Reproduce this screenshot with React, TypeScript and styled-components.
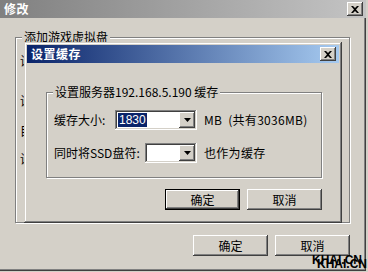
import React from "react";
import styled, { createGlobalStyle, css } from "styled-components";

const GlobalStyle = createGlobalStyle`
  html, body {
    margin: 0;
    padding: 0;
    background: #d4d0c8;
  }
  body {
    font-family: "Noto Sans CJK SC", "Liberation Sans", sans-serif;
    font-size: 12px;
    line-height: 14px;
    color: #000;
  }
`;

const raised = css`
  background: #d4d0c8;
  box-shadow: inset -1px -1px #404040, inset 1px 1px #fff, inset -2px -2px #808080, inset 2px 2px #d4d0c8;
`;

const Window = styled.div`
  position: relative;
  width: 366px;
  height: 271px;
  background: #d4d0c8;
  box-shadow: inset -1px -1px #404040, inset -2px -2px #808080;
`;

const TitleBar = styled.div<{ $active?: boolean }>`
  display: flex;
  align-items: center;
  justify-content: space-between;
  height: 18px;
  padding: 0 3px 0 4px;
  background: ${(p) =>
    p.$active ? "linear-gradient(90deg, #0a246a, #a6caf0)" : "linear-gradient(90deg, #808080, #c4c4c4)"};
  color: #fff;
  font-weight: bold;
  font-size: 12px;
  letter-spacing: 0.5px;
`;

const CloseBtn = styled.div`
  ${raised};
  width: 16px;
  height: 14px;
  display: flex;
  align-items: center;
  justify-content: center;
`;

const Body = styled.div<{ $pad: string }>`
  display: flex;
  flex-direction: column;
  padding: ${(p) => p.$pad};
`;

const Group = styled.div<{ $h: number }>`
  position: relative;
  height: ${(p) => p.$h}px;
  border: 1px solid #808080;
  box-shadow: inset 1px 1px #fff, 1px 1px #fff;
  box-sizing: border-box;
`;

const Legend = styled.span`
  position: absolute;
  top: -8px;
  left: 6px;
  padding: 0 2px;
  background: #d4d0c8;
  white-space: nowrap;
`;

// labels of the outer form, mostly hidden behind the dialog
const HiddenLabels = styled.div`
  display: flex;
  flex-direction: column;
  padding: 16px 0 0 4px;
`;

const HiddenLabel = styled.div<{ $top: number }>`
  margin-top: ${(p) => p.$top}px;
  width: 5px;
  overflow: hidden;
  white-space: nowrap;
`;

const ButtonRow = styled.div<{ $top: number }>`
  display: flex;
  justify-content: flex-end;
  gap: 7px;
  margin-top: ${(p) => p.$top}px;
`;

const Button = styled.div<{ $default?: boolean }>`
  ${raised};
  width: 75px;
  height: 21px;
  box-sizing: border-box;
  display: flex;
  align-items: center;
  justify-content: center;
  font-size: 12px;
  ${(p) =>
    p.$default &&
    css`
      border: 1px solid #000;
    `}
`;

const Dialog = styled.div`
  position: absolute;
  left: 24px;
  top: 42px;
  width: 318px;
  height: 181px;
  box-sizing: border-box;
  padding: 3px;
  background: #d4d0c8;
  box-shadow: inset -1px -1px #404040, inset 1px 1px #d4d0c8, inset -2px -2px #808080, inset 2px 2px #fff;
  display: flex;
  flex-direction: column;
`;

const FormRows = styled.div`
  display: flex;
  flex-direction: column;
  gap: 13px;
  padding: 17px 0 0 7px;
`;

const Row = styled.div`
  display: flex;
  align-items: center;
`;

const Label = styled.span<{ $w: number }>`
  width: ${(p) => p.$w}px;
  white-space: nowrap;
`;

const Combo = styled.div<{ $w: number }>`
  width: ${(p) => p.$w}px;
  height: 20px;
  box-sizing: border-box;
  padding: 2px;
  background: #fff;
  box-shadow: inset -1px -1px #fff, inset 1px 1px #808080, inset -2px -2px #d4d0c8, inset 2px 2px #404040;
  display: flex;
  align-items: stretch;
`;

const ComboText = styled.div`
  flex: 1;
  display: flex;
  align-items: center;
  padding-left: 1px;
`;

const Selected = styled.span`
  background: #0a246a;
  color: #fff;
  font-family: "Liberation Sans", sans-serif;
  font-size: 12px;
  line-height: 14px;
  padding: 0 1px;
`;

const DropBtn = styled.div`
  ${raised};
  width: 16px;
  display: flex;
  align-items: center;
  justify-content: center;
`;

const After = styled.span`
  margin-left: 7px;
  white-space: nowrap;
  letter-spacing: 0.3px;
`;

const Watermark = styled.div`
  position: absolute;
  right: 4px;
  bottom: 6px;
  font-family: "Liberation Sans", sans-serif;
  font-weight: bold;
  font-size: 12px;
  line-height: 10px;
  color: #000;
  text-shadow: 5px 4px 0 #000;
`;

const CloseIcon = () => (
  <svg width="8" height="7" viewBox="0 0 8 7">
    <path d="M0 0h2l2 2 2-2h2L5 3.5 8 7H6L4 5 2 7H0l3-3.5z" fill="#000" />
  </svg>
);

const Arrow = () => (
  <svg width="7" height="4" viewBox="0 0 7 4">
    <path d="M0 0h7L3.5 4z" fill="#000" />
  </svg>
);

export default function App() {
  return (
    <>
      <GlobalStyle />
      <Window>
        <TitleBar>
          <span>修改</span>
          <CloseBtn>
            <CloseIcon />
          </CloseBtn>
        </TitleBar>
        <Body $pad="19px 16px 0 15px">
          <Group $h={186}>
            <Legend>添加游戏虚拟盘</Legend>
            <HiddenLabels>
              <HiddenLabel $top={0}>设置</HiddenLabel>
              <HiddenLabel $top={26}>设置</HiddenLabel>
              <HiddenLabel $top={16}>目录</HiddenLabel>
              <HiddenLabel $top={14}>设置</HiddenLabel>
            </HiddenLabels>
          </Group>
          <ButtonRow $top={12}>
            <Button>确定</Button>
            <Button>取消</Button>
          </ButtonRow>
        </Body>

        <Dialog>
          <TitleBar $active>
            <span>设置缓存</span>
            <CloseBtn>
              <CloseIcon />
            </CloseBtn>
          </TitleBar>
          <Body $pad="29px 17px 0 19px">
            <Group $h={86}>
              <Legend>设置服务器192.168.5.190 缓存</Legend>
              <FormRows>
                <Row>
                  <Label $w={61}>缓存大小:</Label>
                  <Combo $w={82}>
                    <ComboText>
                      <Selected>1830</Selected>
                    </ComboText>
                    <DropBtn>
                      <Arrow />
                    </DropBtn>
                  </Combo>
                  <After>MB&nbsp;&nbsp;(共有3036MB)</After>
                </Row>
                <Row>
                  <Label $w={91}>同时将SSD盘符:</Label>
                  <Combo $w={52}>
                    <ComboText />
                    <DropBtn>
                      <Arrow />
                    </DropBtn>
                  </Combo>
                  <After>也作为缓存</After>
                </Row>
              </FormRows>
            </Group>
            <ButtonRow $top={11}>
              <Button $default>确定</Button>
              <Button>取消</Button>
            </ButtonRow>
          </Body>
        </Dialog>

        <Watermark>KHAI.CN</Watermark>
      </Window>
    </>
  );
}
